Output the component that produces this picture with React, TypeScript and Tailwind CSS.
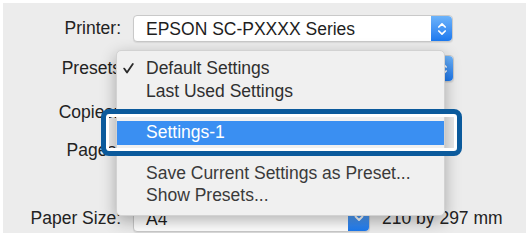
import React from 'react';

const font = { fontFamily: '"Helvetica Neue", "Liberation Sans", Arial, sans-serif' };

function Stepper({ single }: { single?: boolean }) {
  return (
    <div className="flex h-full w-[21px] items-center justify-center rounded-r-[4px] bg-gradient-to-b from-[#6cb3fa] to-[#1a78ee]">
      {single ? (
        <svg width="10" height="7" viewBox="0 0 10 7">
          <path d="M1.5 1.5 L5 5 L8.5 1.5" fill="none" stroke="white" strokeWidth="1.8" strokeLinecap="round" strokeLinejoin="round" />
        </svg>
      ) : (
        <svg width="10" height="16" viewBox="0 0 10 16">
          <path d="M1.8 6 L5 2.8 L8.2 6" fill="none" stroke="white" strokeWidth="1.7" strokeLinecap="round" strokeLinejoin="round" />
          <path d="M1.8 10 L5 13.2 L8.2 10" fill="none" stroke="white" strokeWidth="1.7" strokeLinecap="round" strokeLinejoin="round" />
        </svg>
      )}
    </div>
  );
}

function Popup({ value, width, single }: { value: string; width: string; single?: boolean }) {
  return (
    <div className={`flex h-[27px] ${width} items-stretch rounded-[4px] border border-[#c9c9c9] bg-white shadow-[0_1px_1px_rgba(0,0,0,0.08)]`}>
      <div className="flex flex-1 items-center pl-[12px] pt-[2px] text-[#1e1e1e]">{value}</div>
      <Stepper single={single} />
    </div>
  );
}

function Row({ label, children, className }: { label: string; children?: React.ReactNode; className: string }) {
  return (
    <div className={`flex h-[27px] items-center ${className}`}>
      <div className="w-[118px] shrink-0 text-right text-[#222]">{label}</div>
      <div className="ml-[12px] flex items-center">{children}</div>
    </div>
  );
}

function MenuItem({ label, checked }: { label: string; checked?: boolean }) {
  return (
    <div className="relative flex h-[23px] items-center pl-[29px] text-[#2f2f2f]">
      {checked && (
        <svg className="absolute left-[6px] top-[6px]" width="11" height="11" viewBox="0 0 11 11">
          <path d="M1.2 5.6 L4 9.6 L9.8 1" fill="none" stroke="#2a2a2a" strokeWidth="1.8" strokeLinecap="round" strokeLinejoin="round" />
        </svg>
      )}
      {label}
    </div>
  );
}

export default function App() {
  return (
    <div className="h-[237px] w-[526px] bg-white pb-[4px] pl-[3px] pt-[3px] text-[17.5px] leading-none" style={font}>
      <div className="relative flex h-full flex-col overflow-hidden bg-[#ececec]">
        <Row label="Printer:" className="mt-[12px]">
          <Popup value="EPSON SC-PXXXX Series" width="w-[320px]" />
        </Row>
        <Row label="Presets" className="mt-[13px]">
          <Popup value="Default Settings" width="w-[321px]" />
        </Row>
        <Row label="Copies:" className="mt-[17px] -translate-x-[3px]" />
        <Row label="Pages:" className="mt-[11px]" />
        <Row label="Paper Size:" className="mt-[41px]">
          <Popup value="A4" width="w-[237px]" single />
          <span className="ml-[12px] pt-[1px] text-[#222]">210 by 297 mm</span>
        </Row>

        {/* presets menu */}
        <div className="absolute left-[113px] top-[47px] flex h-[166px] w-[329px] flex-col rounded-[5px] border border-[#d2d2d2] bg-[#f0f0f0] py-[6px] shadow-[0_5px_16px_rgba(0,0,0,0.3)]">
          <MenuItem label="Default Settings" checked />
          <MenuItem label="Last Used Settings" />
          <div className="flex h-[18px] items-center">
            <div className="h-px w-full bg-[#dadada]" />
          </div>
          <div className="flex h-[24px] items-center bg-[#3a8ff2] pl-[29px] text-white">Settings-1</div>
          <div className="flex h-[18px] items-center">
            <div className="h-px w-full bg-[#dadada]" />
          </div>
          <div className="flex h-[22px] items-center pl-[29px] text-[#3a3a3a]">Save Current Settings as Preset...</div>
          <div className="flex h-[22px] items-center pl-[29px] text-[#3a3a3a]">Show Presets...</div>
        </div>

        {/* callout frame */}
        <div className="absolute left-[98px] top-[106px] h-[47px] w-[361px] rounded-[8px] border-[5px] border-[#0b5a9c] shadow-[inset_0_0_0_3px_white]" />
      </div>
    </div>
  );
}
